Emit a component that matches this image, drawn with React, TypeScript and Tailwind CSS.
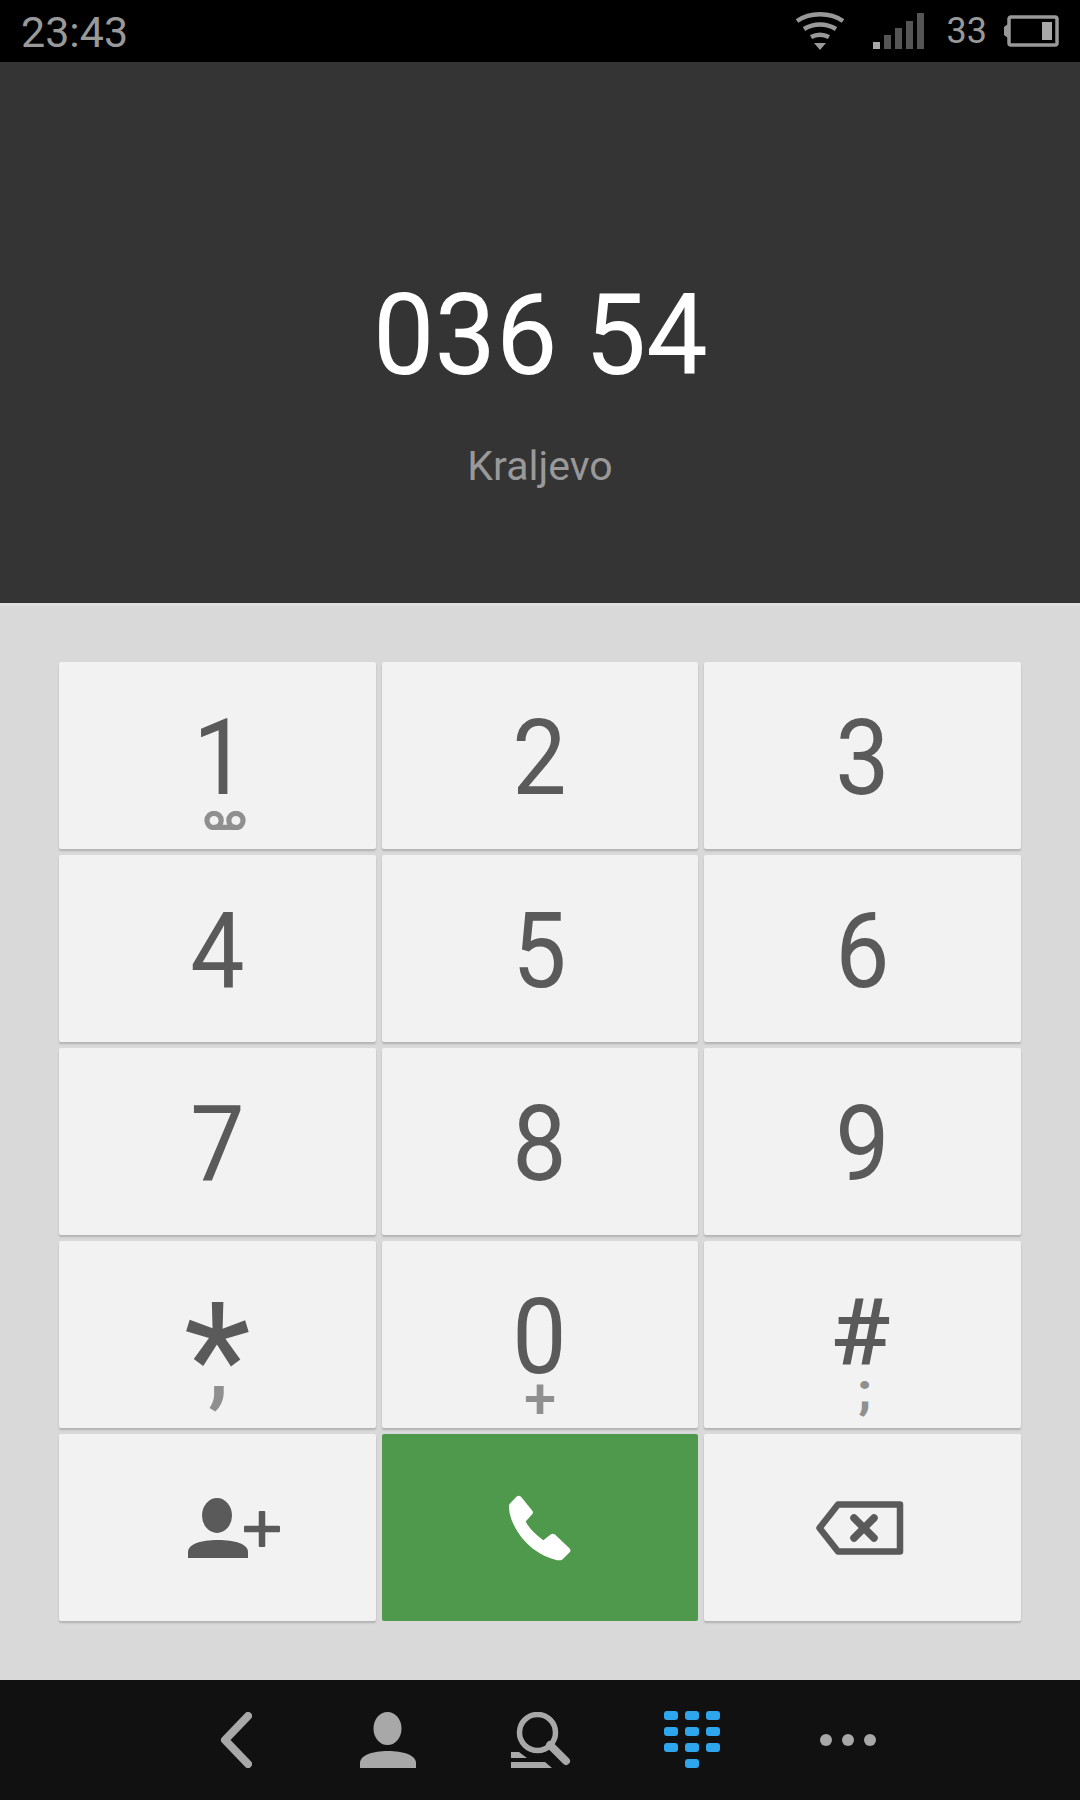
const font = { fontFamily: 'Roboto, sans-serif' };

function VoicemailIcon() {
  return (
    <svg className="mt-[11px] ml-[15px]" width="42" height="19" viewBox="0 0 44 20" fill="none" stroke="#8f8f8f" strokeWidth="5.5">
      <circle cx="10.5" cy="10" r="7.5" />
      <circle cx="33.5" cy="10" r="7.5" />
      <path d="M10.5 17.2h23" />
    </svg>
  );
}

function AddContactIcon() {
  return (
    <svg className="ml-[33px]" width="92" height="60" viewBox="0 0 92 60" fill="#5a5a5a">
      <ellipse cx="29" cy="17.5" rx="15" ry="17.5" />
      <path d="M0 60v-6c0-8 13-12 30-12s30 4 30 12v6z" />
      <rect x="56" y="27.75" width="36" height="6.5" rx="1" />
      <rect x="70.75" y="13" width="6.5" height="36" rx="1" />
    </svg>
  );
}

function PhoneIcon() {
  return (
    <svg width="65" height="68" viewBox="55 40 195 203" fill="#ffffff">
      <path d="M62 70L84 47Q91 42 97 48L131 90Q135 96 130 101L111 122Q125 150 164 178L186 161Q192 156 199 161L243 203Q248 209 243 214L222 235Q215 240 205 238C150 225 95 185 68 115Q58 85 62 70Z" />
    </svg>
  );
}

function BackspaceIcon() {
  return (
    <svg className="mr-[6px]" width="88" height="54" viewBox="0 0 88 54" fill="none" stroke="#5a5a5a" strokeWidth="6.5" strokeLinejoin="round" strokeLinecap="round">
      <path d="M3.5 27L22 3.5h62v47H22z" />
      <path d="M38 17l20 20M58 17L38 37" strokeWidth="7.5" />
    </svg>
  );
}

function BackIcon() {
  return (
    <svg width="32" height="56" viewBox="0 0 32 56" fill="none" stroke="#a8a8a8" strokeWidth="8" strokeLinecap="round" strokeLinejoin="round">
      <path d="M28 4L5 28l23 24" />
    </svg>
  );
}

function PersonIcon() {
  return (
    <svg width="56" height="56" viewBox="0 0 56 56" fill="#a8a8a8">
      <ellipse cx="27.5" cy="16.5" rx="14" ry="16.5" />
      <path d="M0 56v-5c0-8 13-12 28-12s28 4 28 12v5z" />
    </svg>
  );
}

function SearchIcon() {
  return (
    <svg width="60" height="56" viewBox="0 0 60 56" fill="none">
      <circle cx="26.5" cy="20.5" r="18" stroke="#a8a8a8" strokeWidth="5.5" />
      <path d="M39 33l16 16" stroke="#a8a8a8" strokeWidth="8" strokeLinecap="round" />
      <path d="M0 40h8l8 6H0zM0 50h34l7 6H0z" fill="#a8a8a8" />
    </svg>
  );
}

function DialpadIcon() {
  const cells = [
    [0, 0], [21, 0], [42, 0],
    [0, 16], [21, 16], [42, 16],
    [0, 32], [21, 32], [42, 32],
    [21, 48],
  ];
  return (
    <svg width="56" height="58" viewBox="0 0 56 58" fill="#2ea6ee">
      {cells.map(([x, y]) => (
        <rect key={`${x}-${y}`} x={x} y={y} width="14" height="9" rx="3" />
      ))}
    </svg>
  );
}

function MoreIcon() {
  return (
    <svg width="56" height="12" viewBox="0 0 56 12" fill="#a8a8a8">
      <circle cx="6" cy="6" r="6" />
      <circle cx="28" cy="6" r="6" />
      <circle cx="50" cy="6" r="6" />
    </svg>
  );
}

function WifiIcon() {
  return (
    <svg width="50" height="38" viewBox="0 0 50 38" fill="none" stroke="#999999" strokeWidth="4.5">
      <path d="M2 9C15 0 35 0 48 9" />
      <path d="M9 17c10-6 22-6 32 0" />
      <path d="M16 25c6-3 12-3 18 0" />
      <path d="M19 31h12l-6 7z" fill="#999999" stroke="none" />
    </svg>
  );
}

function SignalIcon() {
  return (
    <svg width="52" height="36" viewBox="0 0 52 36" fill="#555555">
      <rect x="0" y="29" width="7" height="7" fill="#a8a8a8" />
      <rect x="11" y="22" width="7" height="14" />
      <rect x="22" y="15" width="7" height="21" />
      <rect x="33" y="8" width="7" height="28" />
      <rect x="44" y="0" width="7" height="36" />
    </svg>
  );
}

function BatteryIcon() {
  return (
    <svg width="56" height="32" viewBox="0 0 56 32" fill="none">
      <path d="M5 9L1 12v8l4 3z" fill="#999999" />
      <rect x="6" y="2" width="48" height="28" rx="2" stroke="#999999" strokeWidth="3.5" />
      <rect x="39" y="7" width="10" height="18" fill="#a8a8a8" />
    </svg>
  );
}

const digit = 'pt-[40px] text-[105px] scale-x-[0.92]';

function Key({ label, sub, labelClass = digit }: { label: string; sub?: React.ReactNode; labelClass?: string }) {
  return (
    <div className="h-[187px] rounded-[2px] bg-[#f2f2f2] shadow-[0_2px_2px_rgba(0,0,0,0.18)] flex flex-col items-center">
      <div className={`h-[138px] leading-[114px] text-[#5a5a5a] ${labelClass}`}>{label}</div>
      {sub}
    </div>
  );
}

export default function App() {
  return (
    <div style={font} className="w-[1080px] h-[1800px] flex flex-col overflow-hidden bg-[#d9d9d9]">
      {/* status bar */}
      <div className="h-[62px] bg-black flex items-center px-[21px] text-[#999999]">
        <span className="pt-[2px] text-[43px] leading-none">23:43</span>
        <div className="ml-auto flex items-center">
          <WifiIcon />
          <div className="ml-[28px]"><SignalIcon /></div>
          <span className="ml-[22px] text-[36px] leading-none">33</span>
          <div className="ml-[16px]"><BatteryIcon /></div>
        </div>
      </div>

      {/* number display */}
      <div className="h-[541px] bg-[#343434] flex flex-col items-center">
        <div className="mt-[208px] text-[114px] leading-[130px] text-white scale-x-[0.96]">036 54</div>
        <div className="mt-[42px] text-[41px] leading-[48px] text-[#999999]">Kraljevo</div>
      </div>
      <div className="h-[3px] bg-[#e0e0e0]" />

      {/* keypad */}
      <div className="h-[1074px] px-[59px] pt-[56px]">
        <div className="grid grid-cols-3 gap-[6px]">
          <Key label="1" labelClass="pt-[40px] pl-[6px] text-[105px] scale-x-[0.92]" sub={<VoicemailIcon />} />
          <Key label="2" />
          <Key label="3" />
          <Key label="4" />
          <Key label="5" />
          <Key label="6" />
          <Key label="7" />
          <Key label="8" />
          <Key label="9" />
          <Key
            label="*"
            labelClass="pt-[62px] text-[155px]"
            sub={<div className="-mt-[23px] ml-[2px] text-[92px] leading-[20px] font-medium text-[#8f8f8f]">,</div>}
          />
          <Key
            label="0"
            sub={<div className="text-[58px] leading-[38px] font-medium text-[#8f8f8f]">+</div>}
          />
          <Key
            label="#"
            labelClass="pt-[36px] pr-[3px] text-[92px] font-medium scale-x-[1.08]"
            sub={<div className="ml-[4px] text-[48px] leading-[25px] font-black text-[#8f8f8f]">;</div>}
          />
          <div className="h-[187px] rounded-[2px] bg-[#f2f2f2] shadow-[0_2px_2px_rgba(0,0,0,0.18)] flex items-center justify-center">
            <AddContactIcon />
          </div>
          <div className="h-[187px] rounded-[2px] bg-[#4f994c] flex items-center justify-center">
            <PhoneIcon />
          </div>
          <div className="h-[187px] rounded-[2px] bg-[#f2f2f2] shadow-[0_2px_2px_rgba(0,0,0,0.18)] flex items-center justify-center">
            <BackspaceIcon />
          </div>
        </div>
      </div>

      {/* bottom nav */}
      <div className="h-[120px] shrink-0 bg-[#111111] flex items-center justify-center">
        <div className="w-[154px] pl-[8px] flex justify-center"><BackIcon /></div>
        <div className="w-[154px] pl-[4px] flex justify-center"><PersonIcon /></div>
        <div className="w-[154px] pl-[2px] flex justify-center"><SearchIcon /></div>
        <div className="w-[154px] pr-[4px] flex justify-center"><DialpadIcon /></div>
        <div className="w-[154px] flex justify-center"><MoreIcon /></div>
      </div>
    </div>
  );
}
